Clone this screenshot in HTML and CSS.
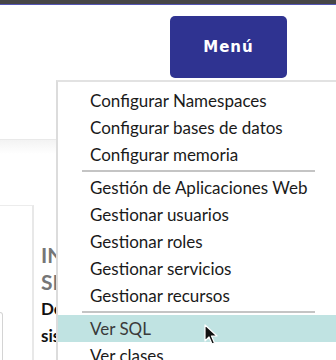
FILE: index.html
```html
<!DOCTYPE html>
<html lang="es">
<head>
    <meta charset="UTF-8">
    <meta name="viewport" content="width=device-width, initial-scale=1.0">
    <title>Menú</title>
    <link rel="stylesheet" href="styles.css">
</head>
<body>

    <!-- Barra superior -->
    <div class="topbar"></div>

    <!-- Cabecera -->
    <div class="header">
        <button class="menu-btn">Menú</button>
    </div>
    <div class="shade"></div>

    <!-- Contenido -->
    <div class="content">
        <div class="cell-a">
            <div class="side-card"></div>
        </div>
        <div class="cell-b">
            <h2 class="card-title">INFORMACIÓN DEL<br>SISTEMA</h2>
            <p class="card-text">Detalles del<br>sistema</p>
        </div>
    </div>

    <!-- Menú desplegable -->
    <ul class="dropdown">
        <li class="item">Configurar Namespaces</li>
        <li class="item">Configurar bases de datos</li>
        <li class="item">Configurar memoria</li>
        <li class="sep"></li>
        <li class="item">Gestión de Aplicaciones Web</li>
        <li class="item">Gestionar usuarios</li>
        <li class="item">Gestionar roles</li>
        <li class="item">Gestionar servicios</li>
        <li class="item">Gestionar recursos</li>
        <li class="sep"></li>
        <li class="item active">Ver SQL</li>
        <li class="item">Ver clases</li>
    </ul>

    <!-- Cursor -->
    <svg class="cursor" width="14" height="22" viewBox="0 0 14 22">
        <path d="M1 1 L1 17 L5 13 L8 20 L10.5 19 L7.5 12 L13 12 Z" fill="#111" stroke="#fff" stroke-width="1.2" stroke-linejoin="round"/>
    </svg>

</body>
</html>
```

FILE: styles.css
```css
* {
    margin: 0;
    padding: 0;
    box-sizing: border-box;
}
body {
    width: 336px;
    height: 360px;
    overflow: hidden;
    position: relative;
    background: #fff;
    font-family: 'Lato', 'DejaVu Sans', sans-serif;
}

/* Barra superior */
.topbar {
    height: 5px;
    background: #464646;
    border-bottom: 1px solid #5456b4;
}

/* Cabecera */
.header {
    height: 135px;
    display: flex;
    justify-content: flex-end;
    align-items: flex-start;
    padding: 11px 49px 0 0;
    border-bottom: 1px solid #e9e9e9;
}
.menu-btn {
    width: 117px;
    height: 62px;
    border: none;
    border-radius: 5px;
    background: #2f3391;
    color: #fff;
    font-family: 'DejaVu Sans', sans-serif;
    font-weight: bold;
    font-size: 15px;
    letter-spacing: 1px;
}
.shade {
    height: 14px;
    background: linear-gradient(#f3f3f3, #fff);
}

/* Contenido */
.content {
    display: flex;
    margin-top: 51px;
}
.cell-a {
    width: 34px;
    height: 160px;
    border-top: 1px solid #ececec;
    border-right: 2px solid #e8e8e8;
    padding-top: 106px;
}
.side-card {
    width: 3px;
    height: 60px;
    border: 1px solid #d4d4d4;
    border-left: none;
    border-radius: 0 6px 0 0;
}
.cell-b {
    width: 22px;
    overflow: hidden;
    padding: 36px 0 0 7px;
    white-space: nowrap;
}
.card-title {
    color: #767676;
    font-size: 21px;
    line-height: 27px;
    font-weight: bold;
}
.card-text {
    color: #111;
    font-size: 17px;
    line-height: 27px;
    font-weight: bold;
}

/* Menú desplegable */
.dropdown {
    position: absolute;
    left: 56px;
    right: 0;
    top: 80px;
    list-style: none;
    background: #fff;
    border-top: 2px solid #e2e2e2;
    border-left: 2px solid #dcdcdc;
    padding-top: 5px;
}
.item {
    height: 27px;
    line-height: 27px;
    padding-left: 32px;
    font-size: 17px;
    color: #1a1a1a;
    white-space: nowrap;
    overflow: hidden;
}
.item.active {
    background: #c0e3e2;
    color: #3a3a3a;
}
.sep {
    height: 2px;
    margin: 2px 21px 2px 24px;
    background: #c4c4c4;
}

/* Cursor */
.cursor {
    position: absolute;
    left: 204px;
    top: 324px;
}
```
